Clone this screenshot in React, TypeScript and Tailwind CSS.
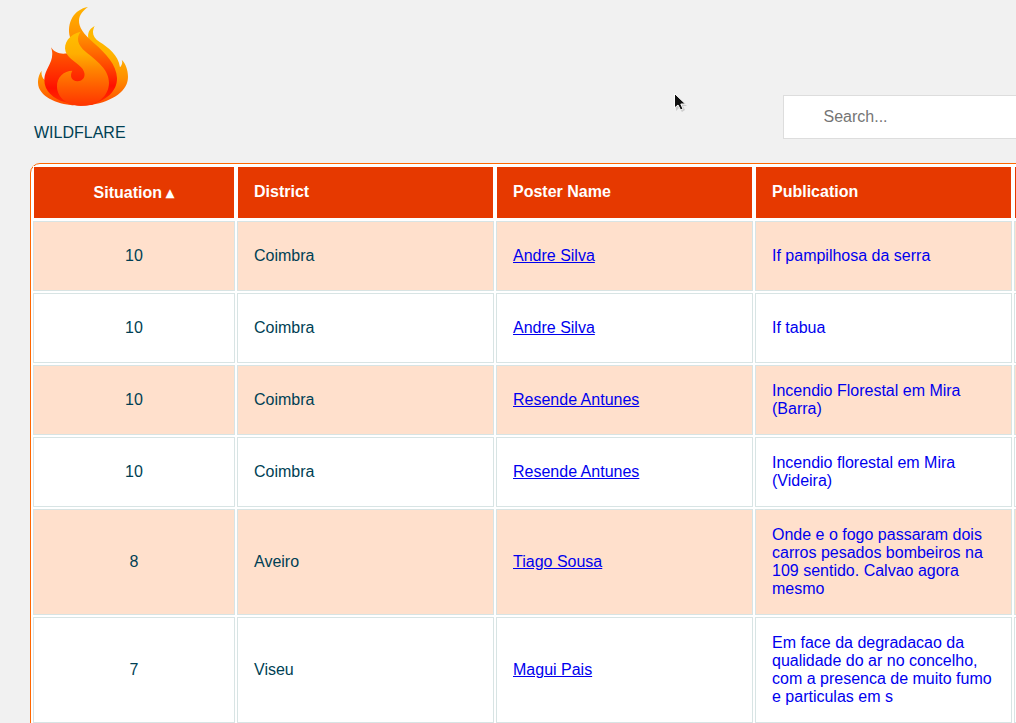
type Row = {
  situation: number;
  district: string;
  poster: string;
  publication: string;
};

const rows: Row[] = [
  { situation: 10, district: "Coimbra", poster: "Andre Silva", publication: "If pampilhosa da serra" },
  { situation: 10, district: "Coimbra", poster: "Andre Silva", publication: "If tabua" },
  { situation: 10, district: "Coimbra", poster: "Resende Antunes", publication: "Incendio Florestal em Mira (Barra)" },
  { situation: 10, district: "Coimbra", poster: "Resende Antunes", publication: "Incendio florestal em Mira (Videira)" },
  {
    situation: 8,
    district: "Aveiro",
    poster: "Tiago Sousa",
    publication: "Onde e o fogo passaram dois carros pesados bombeiros na 109 sentido. Calvao agora mesmo",
  },
  {
    situation: 7,
    district: "Viseu",
    poster: "Magui Pais",
    publication: "Em face da degradacao da qualidade do ar no concelho, com a presenca de muito fumo e particulas em s",
  },
];

function FlameLogo() {
  return (
    <svg className="block h-[99px] w-[90px]" viewBox="30 21 270 297" aria-hidden="true">
      <defs>
        <linearGradient id="outer" gradientUnits="userSpaceOnUse" x1="0" y1="78" x2="0" y2="317">
          <stop offset="0" stopColor="#ffba00" />
          <stop offset="0.35" stopColor="#ffb400" />
          <stop offset="0.65" stopColor="#ff9000" />
          <stop offset="1" stopColor="#ff4a00" />
        </linearGradient>
        <linearGradient id="tip" gradientUnits="userSpaceOnUse" x1="0" y1="21" x2="0" y2="317">
          <stop offset="0" stopColor="#ffb400" />
          <stop offset="0.28" stopColor="#ff9200" />
          <stop offset="0.45" stopColor="#ff6c00" />
          <stop offset="0.62" stopColor="#ff4200" />
          <stop offset="0.8" stopColor="#ff1000" />
          <stop offset="1" stopColor="#ff3000" />
        </linearGradient>
        <linearGradient id="body" gradientUnits="userSpaceOnUse" x1="0" y1="142" x2="0" y2="317">
          <stop offset="0" stopColor="#ff6000" />
          <stop offset="0.55" stopColor="#ff2400" />
          <stop offset="0.7" stopColor="#ff1000" />
          <stop offset="1" stopColor="#ff3000" />
        </linearGradient>
        <linearGradient id="core" gradientUnits="userSpaceOnUse" x1="0" y1="95" x2="0" y2="317">
          <stop offset="0" stopColor="#ffc000" />
          <stop offset="0.3" stopColor="#ffae00" />
          <stop offset="0.5" stopColor="#ff8600" />
          <stop offset="0.75" stopColor="#ff5c00" />
          <stop offset="1" stopColor="#ff3400" />
        </linearGradient>
      </defs>
      <path
        fill="url(#outer)"
        d="M200 78C184 86 178 100 181 116L110 240L50 240C42 234 39 222 41 212C30 226 27 248 33 264C48 299 103 317 158 317C219 317 281 290 296 252C305 229 298 195 281 179C285 189 281 196 276 202C271 164 240 142 215 126C193 112 191 96 200 78Z"
      />
      <path
        fill="url(#body)"
        d="M69 142C80 159 97 163 118 160L205 220L197 312C175 319 139 319 113 307C75 296 48 273 49 237C50 205 84 181 69 142Z"
      />
      <path
        fill="url(#tip)"
        d="M180 21C138 28 115 68 126 112L150 180L222 248L185 316C232 302 268 276 267 234C266 194 232 159 200 131C165 102 152 81 153 61C154 44 166 31 180 21Z"
      />
      <path
        fill="url(#core)"
        d="M158 95C124 102 105 130 113 155C121 177 152 189 164 207C178 229 164 244 148 244C131 243 124 228 133 212C108 212 86 231 87 261C88 292 117 317 158 317C210 317 242 288 243 249C244 208 205 182 173 155C148 134 144 113 158 95Z"
      />
    </svg>
  );
}

function Pointer() {
  return (
    <svg className="pointer-events-none absolute left-[673px] top-[92px] h-[21px] w-[15px]" viewBox="0 0 15 21" aria-hidden="true">
      <path d="M3 4V19L6 16L9 20L12 18L10 14H14Z" fill="#000" opacity="0.15" />
      <path
        d="M1.5 1.5V16L5 13L7.6 18L10 17L7.8 12H12.5Z"
        fill="#111"
        stroke="#fff"
        strokeWidth="1"
        strokeLinejoin="round"
      />
    </svg>
  );
}

const head = "h-[53px] border border-white bg-[#e63900] bg-clip-padding px-4 py-0 align-middle font-bold text-white";
const cell = "h-[70px] border border-[#d8e4e4] px-4 py-0 align-middle";

export default function App() {
  return (
    <div className="relative h-[723px] w-full overflow-hidden bg-[#f1f1f1] font-['Liberation_Sans',Arial,sans-serif] text-base leading-[18px] text-[#003f54]">
      <header className="flex h-[163px] justify-between">
        <div className="pl-[34px] pt-[7px]">
          <div className="pl-1">
            <FlameLogo />
          </div>
          <div className="mt-[18px]">WILDFLARE</div>
        </div>
        <div className="pt-[95px]">
          <input
            type="text"
            placeholder="Search..."
            className="block h-11 w-[233px] border border-r-0 border-[#dddddd] bg-white pl-[39.5px] pr-3 text-base text-[#003f54] outline-none placeholder:text-[#757575]"
          />
        </div>
      </header>

      <main className="ml-[30px] h-[600px] w-[1246px] rounded-[10px] border border-[#ff6600] bg-white">
        <table className="w-[1243px] table-fixed border-separate border-spacing-[2px]">
          <colgroup>
            <col className="w-[202px]" />
            <col className="w-[257px]" />
            <col className="w-[257px]" />
            <col className="w-[257px]" />
            <col />
          </colgroup>
          <thead>
            <tr>
              <th className={`${head} text-center`}>
                <div className="pt-px">Situation ▴</div>
              </th>
              <th className={`${head} pb-px text-left`}>District</th>
              <th className={`${head} pb-px text-left`}>Poster Name</th>
              <th className={`${head} pb-px text-left`}>Publication</th>
              <th className={head} />
            </tr>
          </thead>
          <tbody>
            {rows.map((row, i) => (
              <tr key={i} className={`${i % 2 === 0 ? "bg-[#ffe0cc]" : "bg-white"} ${i > 3 ? "h-[106px]" : "h-[70px]"}`}>
                <td className={`${cell} text-center`}>{row.situation}</td>
                <td className={cell}>{row.district}</td>
                <td className={cell}>
                  <a href="#" className="pr-[0.4px] text-[#0000ee] underline">
                    {row.poster}
                  </a>
                </td>
                <td className={`${cell} text-[#0000ee]`}>{row.publication}</td>
                <td className={cell} />
              </tr>
            ))}
          </tbody>
        </table>
      </main>
      <Pointer />
    </div>
  );
}
